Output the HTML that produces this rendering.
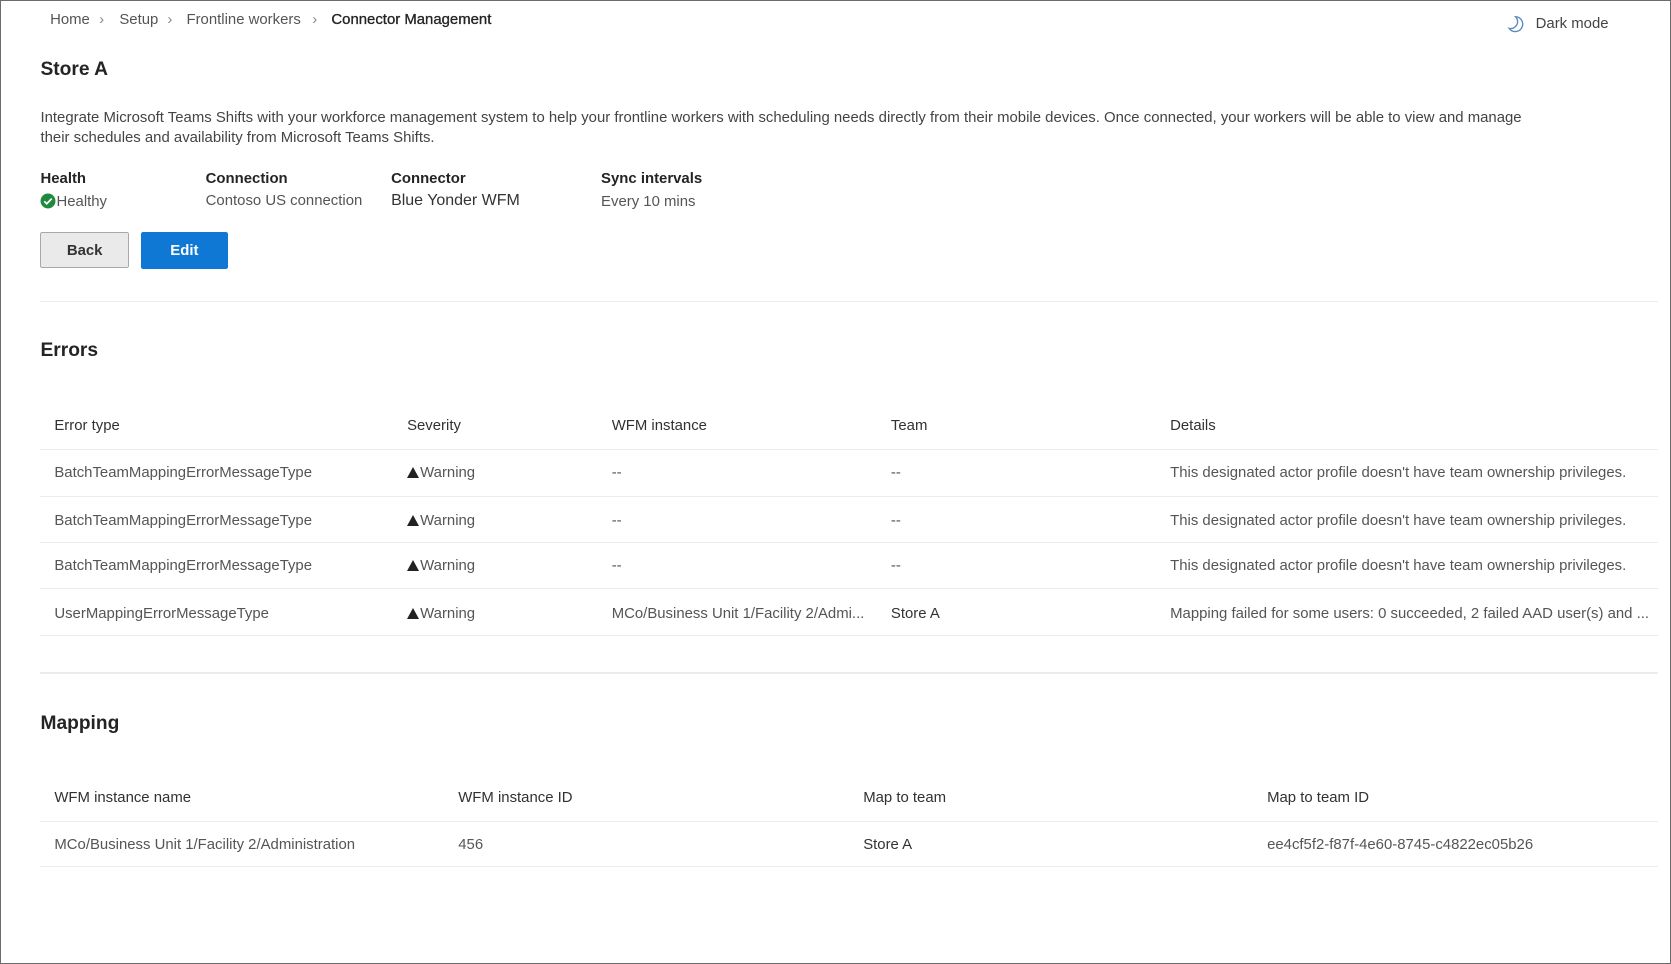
<!DOCTYPE html>
<html><head><meta charset="utf-8"><style>
html,body{margin:0;padding:0;background:#fff;width:1671px;height:964px;overflow:hidden}
#w{zoom:1.06569;position:relative;width:1568px;height:905px;font-family:"Liberation Sans",Arial,sans-serif;color:#323130}
.frame{position:absolute;left:0;top:0;width:1566px;height:903px;border:1px solid #6b6b6b}
.a{position:absolute;white-space:nowrap}
.bc{font-size:14px;color:#555;top:11px}
.h{font-size:14px;font-weight:bold;color:#252423}
.v{font-size:14px;color:#555}
.line{position:absolute;left:38px;right:12px;height:1px;background:#ececec}
.th{font-size:14px;color:#323130;top:2px}
.td{font-size:14px;color:#555;margin-top:2px}
.tri{display:inline-block;width:0;height:0;border-left:6px solid transparent;border-right:6px solid transparent;border-bottom:11px solid #222;margin-right:1px;vertical-align:-1px}
</style></head><body><div id="w">
<div class="frame"></div>
<div class="a bc" style="left:47px">Home</div>
<div class="a bc" style="left:93px;color:#888">&#x203A;</div>
<div class="a bc" style="left:112px">Setup</div>
<div class="a bc" style="left:157px;color:#888">&#x203A;</div>
<div class="a bc" style="left:175px">Frontline workers</div>
<div class="a bc" style="left:293px;color:#888">&#x203A;</div>
<div class="a bc" style="left:311px;color:#252423;-webkit-text-stroke:.3px #252423">Connector Management</div>
<svg class="a" style="left:1414px;top:13px" width="20" height="20" viewBox="0 0 20 20"><path d="M8 2.5a7 7 0 1 1 -6 11A6.5 6.5 0 0 0 8 2.5z" fill="none" stroke="#5a8ac0" stroke-width="1.3"/></svg>
<div class="a" style="left:1441px;top:15px;font-size:14px;color:#444">Dark mode</div>
<div class="a" style="left:38px;top:55px;font-size:18px;font-weight:bold;color:#252423">Store A</div>
<div class="a" style="left:38px;top:101px;font-size:14px;color:#444;line-height:19px;white-space:normal;width:1418px">Integrate Microsoft Teams Shifts with your workforce management system to help your frontline workers with scheduling needs directly from their mobile devices. Once connected, your workers will be able to view and manage their schedules and availability from Microsoft Teams Shifts.</div>
<div class="a h" style="left:38px;top:160px">Health</div>
<div class="a h" style="left:193px;top:160px">Connection</div>
<div class="a h" style="left:367px;top:160px">Connector</div>
<div class="a h" style="left:564px;top:160px">Sync intervals</div>
<svg class="a" style="left:38px;top:181px" width="15" height="15" viewBox="0 0 15 15"><circle cx="7.5" cy="7.5" r="7" fill="#1f8a3c"/><path d="M4 7.8l2.3 2.3L11 5.3" fill="none" stroke="#fff" stroke-width="1.6"/></svg>
<div class="a v" style="left:53px;top:182px">Healthy</div>
<div class="a v" style="left:193px;top:181px">Contoso US connection</div>
<div class="a v" style="left:367px;top:180px;font-size:15px;color:#333">Blue Yonder WFM</div>
<div class="a v" style="left:564px;top:182px">Every 10 mins</div>
<div class="a" style="left:38px;top:218px;width:81px;height:32px;background:#eaeaea;border:1px solid #a8a8a8;border-radius:2px;font-size:14px;font-weight:bold;color:#333;text-align:center;line-height:34px">Back</div>
<div class="a" style="left:132px;top:218px;width:82px;height:34px;background:#0f78d4;border-radius:2px;font-size:14px;font-weight:bold;color:#fff;text-align:center;line-height:36px">Edit</div>
<div class="line" style="top:282px"></div>
<div class="a" style="left:38px;top:319px;font-size:18px;font-weight:bold;color:#252423">Errors</div>
<div style="position:absolute;left:0;top:390px;width:1568px">
<div class="a th" style="left:51px">Error type</div>
<div class="a th" style="left:382px">Severity</div>
<div class="a th" style="left:574px">WFM instance</div>
<div class="a th" style="left:836px">Team</div>
<div class="a th" style="left:1098px">Details</div>
</div>
<div class="line" style="top:421px"></div>
<div style="position:absolute;left:0;top:434px;width:1568px">
<div class="a td" style="left:51px">BatchTeamMappingErrorMessageType</div>
<div class="a td" style="left:382px"><span class="tri"></span>Warning</div>
<div class="a td" style="left:574px">--</div><div class="a td" style="left:836px">--</div>
<div class="a td" style="left:1098px">This designated actor profile doesn't have team ownership privileges.</div></div>
<div class="line" style="top:465px"></div>
<div style="position:absolute;left:0;top:479px;width:1568px">
<div class="a td" style="left:51px">BatchTeamMappingErrorMessageType</div>
<div class="a td" style="left:382px"><span class="tri"></span>Warning</div>
<div class="a td" style="left:574px">--</div><div class="a td" style="left:836px">--</div>
<div class="a td" style="left:1098px">This designated actor profile doesn't have team ownership privileges.</div></div>
<div class="line" style="top:509px"></div>
<div style="position:absolute;left:0;top:522px;width:1568px">
<div class="a td" style="left:51px">BatchTeamMappingErrorMessageType</div>
<div class="a td" style="left:382px"><span class="tri"></span>Warning</div>
<div class="a td" style="left:574px">--</div><div class="a td" style="left:836px">--</div>
<div class="a td" style="left:1098px">This designated actor profile doesn't have team ownership privileges.</div></div>
<div class="line" style="top:552px"></div>
<div style="position:absolute;left:0;top:567px;width:1568px">
<div class="a td" style="left:51px">UserMappingErrorMessageType</div>
<div class="a td" style="left:382px"><span class="tri"></span>Warning</div>
<div class="a td" style="left:574px">MCo/Business Unit 1/Facility 2/Admi...</div><div class="a td" style="left:836px;color:#333">Store A</div>
<div class="a td" style="left:1098px">Mapping failed for some users: 0 succeeded, 2 failed AAD user(s) and ...</div></div>
<div class="line" style="top:596px"></div>
<div class="line" style="top:631px"></div>
<div class="a" style="left:38px;top:669px;font-size:18px;font-weight:bold;color:#252423">Mapping</div>
<div style="position:absolute;left:0;top:739px;width:1568px">
<div class="a th" style="left:51px">WFM instance name</div>
<div class="a th" style="left:430px">WFM instance ID</div>
<div class="a th" style="left:810px">Map to team</div>
<div class="a th" style="left:1189px">Map to team ID</div></div>
<div class="line" style="top:770px"></div>
<div style="position:absolute;left:0;top:783px;width:1568px">
<div class="a td" style="left:51px">MCo/Business Unit 1/Facility 2/Administration</div>
<div class="a td" style="left:430px">456</div>
<div class="a td" style="left:810px;color:#333">Store A</div>
<div class="a td" style="left:1189px">ee4cf5f2-f87f-4e60-8745-c4822ec05b26</div></div>
<div class="line" style="top:813px"></div>
</div></body></html>
